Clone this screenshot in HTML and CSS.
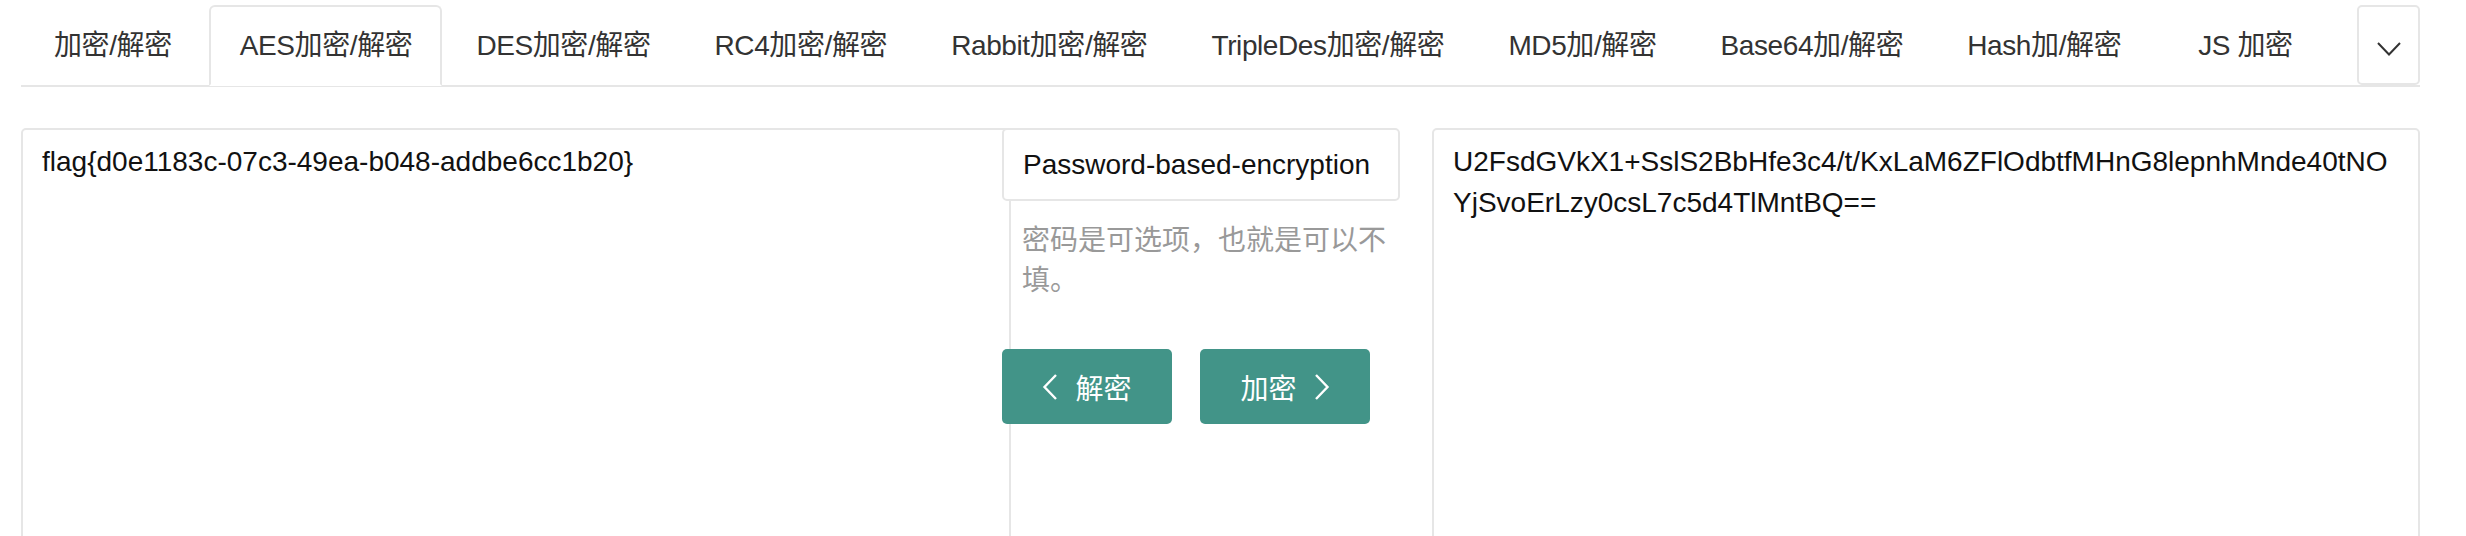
FILE: index.html
```html
<!DOCTYPE html>
<html lang="zh-CN">
<head>
  <meta charset="UTF-8" />
  <meta name="viewport" content="width=device-width, initial-scale=1.0"/>
  <title>AES加密/解密</title>
  <link rel="stylesheet" href="styles.css">
</head>
<body>
  <div class="page">
    <ul class="tabs">
      <li class="first"><a href="#">加密/解密</a></li>
      <li class="active"><a href="#">AES加密/解密</a></li>
      <li><a href="#">DES加密/解密</a></li>
      <li><a href="#">RC4加密/解密</a></li>
      <li><a href="#">Rabbit加密/解密</a></li>
      <li><a href="#">TripleDes加密/解密</a></li>
      <li><a href="#">MD5加/解密</a></li>
      <li><a href="#">Base64加/解密</a></li>
      <li><a href="#">Hash加/解密</a></li>
      <li class="js"><a href="#">JS 加密</a></li>
      <li class="more">
        <a href="#">
          <svg width="24" height="14" viewBox="0 0 24 14"><path d="M1 1 L12 12.5 L23 1" fill="none" stroke="#333" stroke-width="2"/></svg>
        </a>
      </li>
    </ul>

    <div class="workspace">
      <textarea class="box box-src">flag{d0e1183c-07c3-49ea-b048-addbe6cc1b20}</textarea>

      <div class="middle">
        <input type="text" class="pwd" value="Password-based-encryption" />
        <p class="hint">密码是可选项，也就是可以不填。</p>
        <div class="actions">
          <button class="btn">
            <svg width="16" height="26" viewBox="0 0 16 26"><path d="M14 1 L2.5 13 L14 25" fill="none" stroke="#fff" stroke-width="2.4"/></svg>
            <span>解密</span>
          </button>
          <button class="btn">
            <span>加密</span>
            <svg width="16" height="26" viewBox="0 0 16 26"><path d="M2 1 L13.5 13 L2 25" fill="none" stroke="#fff" stroke-width="2.4"/></svg>
          </button>
        </div>
      </div>

      <textarea class="box box-dst">U2FsdGVkX1+SslS2BbHfe3c4/t/KxLaM6ZFlOdbtfMHnG8lepnhMnde40tNOYjSvoErLzy0csL7c5d4TlMntBQ==</textarea>
    </div>
  </div>
</body>
</html>
```

FILE: styles.css
```css
body {
  margin: 0;
  font-family: 'Liberation Sans', 'Noto Sans CJK SC', sans-serif;
  font-size: 28px;
  color: #333;
  background-color: #fff;
}

.page {
  width: 2399px;
  margin-left: 21px;
  padding-top: 5px;
}

.tabs {
  display: flex;
  list-style: none;
  margin: 0;
  padding: 0 0 0 2px;
  border-bottom: 2px solid #e6e6e6;
}

.tabs li {
  flex-shrink: 0;
  margin-bottom: -2px;
  margin-right: 3px;
}

.tabs a {
  display: block;
  padding: 18px 28px 18px 29px;
  line-height: 41px;
  border: 2px solid transparent;
  border-radius: 6px 6px 0 0;
  color: #333;
  text-decoration: none;
  white-space: nowrap;
  letter-spacing: -0.4px;
}

.tabs .first a {
  padding-right: 32px;
}

.tabs .js a {
  padding-left: 42px;
}

.tabs .active a {
  border-color: #e6e6e6 #e6e6e6 #fff;
  background-color: #fff;
}

.tabs .more {
  margin-left: auto;
  margin-right: 0;
  margin-bottom: 0;
}

.tabs .more a {
  box-sizing: border-box;
  display: flex;
  align-items: center;
  justify-content: center;
  width: 63px;
  height: 80px;
  padding: 8px 0 0;
  border-color: #e6e6e6;
  border-radius: 5px;
}

.workspace {
  display: flex;
  align-items: flex-start;
  margin-top: 41px;
}

.box {
  box-sizing: border-box;
  height: 440px;
  padding: 11px 19px;
  border: 2px solid #e6e6e6;
  border-radius: 5px;
  font-family: 'Liberation Sans', 'Noto Sans CJK SC', sans-serif;
  font-size: 28px;
  line-height: 41px;
  color: #111;
  resize: none;
  overflow: hidden;
  word-break: break-all;
  outline: none;
}

.box-src {
  width: 990px;
}

.box-dst {
  width: 988px;
}

.middle {
  width: 398px;
  margin-left: -9px;
  margin-right: 32px;
  flex-shrink: 0;
}

.pwd {
  display: block;
  box-sizing: border-box;
  width: 398px;
  height: 73px;
  padding: 0 19px;
  border: 2px solid #e6e6e6;
  border-radius: 5px;
  font-family: 'Liberation Sans', 'Noto Sans CJK SC', sans-serif;
  font-size: 28px;
  color: #111;
  background-color: #fff;
  outline: none;
}

.hint {
  margin: 20px 0 0;
  padding-left: 20px;
  line-height: 40px;
  color: #999;
}

.actions {
  display: flex;
  gap: 28px;
  margin-top: 48px;
}

.btn {
  display: flex;
  align-items: center;
  justify-content: center;
  gap: 17px;
  width: 170px;
  height: 75px;
  padding: 0;
  border: none;
  border-radius: 5px;
  background-color: #429488;
  color: #fff;
  font-family: 'Liberation Sans', 'Noto Sans CJK SC', sans-serif;
  font-size: 28px;
  cursor: pointer;
}
```
